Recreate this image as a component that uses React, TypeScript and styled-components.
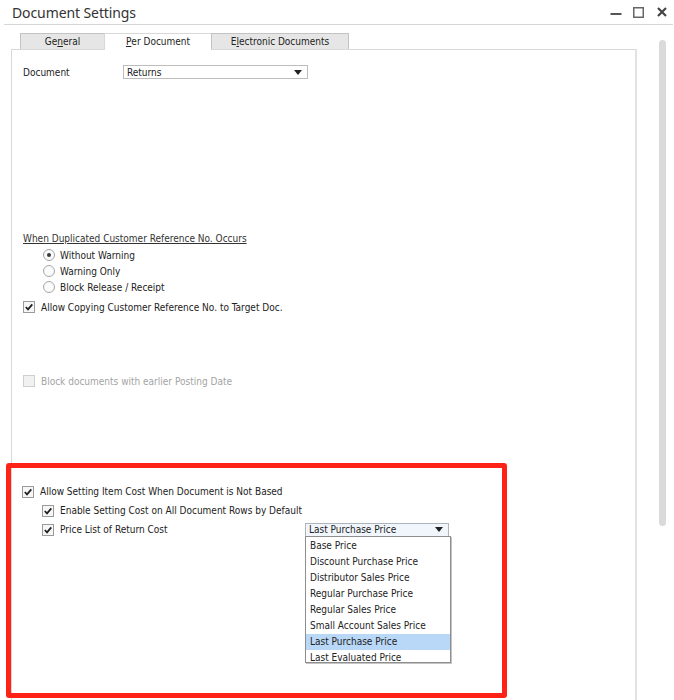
import React from 'react';
import styled, { createGlobalStyle } from 'styled-components';

const GlobalStyle = createGlobalStyle`
  html, body {
    margin: 0;
    padding: 0;
    background: #ffffff;
  }
  body {
    font-family: "DejaVu Sans Condensed", "DejaVu Sans", sans-serif;
    font-size: 10px;
    color: #222222;
  }
`;

const Window = styled.div`
  width: 674px;
  height: 700px;
  overflow: hidden;
  background: #ffffff;
  display: flex;
  flex-direction: column;
`;

const TitleBar = styled.header`
  height: 24px;
  margin: 0 1px 0 4px;
  padding-left: 8px;
  border-bottom: 1px solid #d6d6d6;
  display: flex;
  align-items: center;
  flex-shrink: 0;
`;

const Title = styled.h1`
  margin: 0;
  flex: 1;
  font-family: "Noto Sans", "Open Sans", sans-serif;
  font-weight: 400;
  font-size: 14px;
  color: #333333;
  letter-spacing: -0.1px;
`;

const WinButton = styled.button`
  width: 23px;
  height: 24px;
  padding: 0;
  border: none;
  background: transparent;
  display: flex;
  align-items: center;
  justify-content: center;
`;

const Body = styled.div`
  display: flex;
  align-items: flex-start;
  flex: 1;
`;

const TabsArea = styled.div`
  width: 626px;
  margin: 8px 0 0 11px;
  display: flex;
  flex-direction: column;
`;

const TabStrip = styled.div`
  display: flex;
  align-items: flex-start;
  height: 16px;
  padding-left: 10px;
  position: relative;
  z-index: 1;
`;

const Tab = styled.div<{ $active?: boolean; $w: number }>`
  width: ${(p) => p.$w}px;
  height: ${(p) => (p.$active ? 17 : 16)}px;
  margin-left: -1px;
  box-sizing: border-box;
  border: 1px solid ${(p) => (p.$active ? '#d8d8d8' : '#c3c3c3')};
  border-bottom: none;
  background: ${(p) => (p.$active ? '#ffffff' : '#e6e6e6')};
  display: flex;
  align-items: center;
  justify-content: center;
  color: #222222;
  padding-bottom: ${(p) => (p.$active ? 1 : 0)}px;

  u {
    text-decoration: underline;
  }
`;

const Panel = styled.div`
  height: 700px;
  border: 1px solid #d8d8d8;
  border-right: 2px solid #e2e2e2;
  padding: 0 11px;
  background: #ffffff;
`;

const Line = styled.div<{ $indent?: number; $gap?: number; $h?: number }>`
  display: flex;
  align-items: center;
  height: ${(p) => p.$h ?? 16}px;
  padding-left: ${(p) => p.$indent ?? 0}px;
  margin-top: ${(p) => p.$gap ?? 0}px;
`;

const FieldLabel = styled.span<{ $w: number }>`
  width: ${(p) => p.$w}px;
  flex-shrink: 0;
`;

const Select = styled.div<{ $w: number; $tint?: boolean }>`
  width: ${(p) => p.$w}px;
  height: 14px;
  box-sizing: border-box;
  border: 1px solid ${(p) => (p.$tint ? '#aeb4bc' : '#bdbdbd')};
  background: ${(p) => (p.$tint ? '#f1f6fd' : '#ffffff')};
  display: flex;
  align-items: center;
  justify-content: space-between;
  padding: 0 5px 0 3px;
  position: relative;
`;

const GroupTitle = styled.div`
  height: 16px;
  line-height: 16px;
  text-decoration: underline;
  color: #333333;
`;

const Box = styled.span<{ $disabled?: boolean }>`
  width: 12px;
  height: 12px;
  box-sizing: border-box;
  border: 1px solid ${(p) => (p.$disabled ? '#cfcfcf' : '#9a9a9a')};
  background: ${(p) => (p.$disabled ? '#f1f1f1' : '#f6f6f6')};
  display: flex;
  align-items: center;
  justify-content: center;
  flex-shrink: 0;
  margin-right: 6px;
`;

const Round = styled.span`
  width: 12px;
  height: 12px;
  box-sizing: border-box;
  border-radius: 50%;
  border: 1px solid #a5a5a5;
  background: #fbfbfb;
  display: flex;
  align-items: center;
  justify-content: center;
  flex-shrink: 0;
  margin-right: 5px;
`;

const Dot = styled.span`
  width: 4px;
  height: 4px;
  border-radius: 50%;
  background: #3a3a3a;
`;

const Text = styled.span<{ $disabled?: boolean }>`
  color: ${(p) => (p.$disabled ? '#a3a3a3' : '#222222')};
  white-space: nowrap;
`;

const Highlight = styled.section`
  width: 501px;
  height: 235px;
  margin: 74px 0 0 -17px;
  box-sizing: border-box;
  border: 5px solid #ff2216;
  border-radius: 3px;
  padding: 14px 0 0 11px;
  position: relative;
`;

const DropList = styled.ul`
  position: absolute;
  top: 100%;
  left: -1px;
  width: 146px;
  height: 127px;
  margin: 0;
  padding: 1px 0 0;
  list-style: none;
  box-sizing: border-box;
  overflow: hidden;
  background: #ffffff;
  border: 1px solid #8e8e8e;
  box-shadow: 1px 1px 0 #c4c4c4;
  z-index: 2;
`;

const DropItem = styled.li<{ $selected?: boolean }>`
  height: 16px;
  line-height: 16px;
  padding-left: 4px;
  background: ${(p) => (p.$selected ? '#b9d7f6' : 'transparent')};
  white-space: nowrap;
`;

const ScrollTrack = styled.div`
  width: 7px;
  height: 486px;
  margin: 15px 0 0 22px;
  border-radius: 4px;
  background: #dadada;
`;

const Arrow = () => (
  <svg width="8" height="5" viewBox="0 0 8 5">
    <polygon points="0,0 8,0 4,5" fill="#222" />
  </svg>
);

const Check = () => (
  <svg width="10" height="10" viewBox="0 0 10 10">
    <polyline points="1.8,5 4,7.4 8.3,2.4" fill="none" stroke="#1e1e1e" strokeWidth="1.7" />
  </svg>
);

const CheckLine = ({ label, indent, gap, h, checked = true, disabled }: {
  label: string; indent?: number; gap?: number; h?: number; checked?: boolean; disabled?: boolean;
}) => (
  <Line $indent={indent} $gap={gap} $h={h}>
    <Box $disabled={disabled}>{checked && <Check />}</Box>
    <Text $disabled={disabled}>{label}</Text>
  </Line>
);

const RadioLine = ({ label, on }: { label: string; on?: boolean }) => (
  <Line $indent={20}>
    <Round>{on && <Dot />}</Round>
    <Text>{label}</Text>
  </Line>
);

const priceLists = [
  'Base Price',
  'Discount Purchase Price',
  'Distributor Sales Price',
  'Regular Purchase Price',
  'Regular Sales Price',
  'Small Account Sales Price',
  'Last Purchase Price',
  'Last Evaluated Price',
];

export default function App() {
  return (
    <Window>
      <GlobalStyle />
      <TitleBar>
        <Title>Document Settings</Title>
        <WinButton aria-label="Minimize">
          <svg width="12" height="12" viewBox="0 0 12 12">
            <rect x="0.5" y="7" width="11" height="2" fill="#555" />
          </svg>
        </WinButton>
        <WinButton aria-label="Maximize">
          <svg width="11" height="11" viewBox="0 0 11 11">
            <rect x="0.75" y="0.75" width="9.5" height="9.5" fill="none" stroke="#666" strokeWidth="1.5" />
          </svg>
        </WinButton>
        <WinButton aria-label="Close">
          <svg width="10" height="10" viewBox="0 0 10 10">
            <path d="M1 1 L9 9 M9 1 L1 9" stroke="#444" strokeWidth="2.2" />
          </svg>
        </WinButton>
      </TitleBar>
      <Body>
        <TabsArea>
          <TabStrip>
            <Tab $w={85}>Ge<u>n</u>eral</Tab>
            <Tab $w={108} $active><u>P</u>er Document</Tab>
            <Tab $w={138}>E<u>l</u>ectronic Documents</Tab>
          </TabStrip>
          <Panel>
            <Line $gap={14}>
              <FieldLabel $w={100}>Document</FieldLabel>
              <Select $w={185}>
                <span>Returns</span>
                <Arrow />
              </Select>
            </Line>

            <GroupTitle style={{ marginTop: 151 }}>When Duplicated Customer Reference No. Occurs</GroupTitle>
            <RadioLine label="Without Warning" on />
            <RadioLine label="Warning Only" />
            <RadioLine label="Block Release / Receipt" />
            <CheckLine gap={4} label="Allow Copying Customer Reference No. to Target Doc." />

            <CheckLine gap={58} label="Block documents with earlier Posting Date" checked={false} disabled />

            <Highlight>
              <CheckLine h={19} label="Allow Setting Item Cost When Document is Not Based" />
              <CheckLine h={19} indent={20} label="Enable Setting Cost on All Document Rows by Default" />
              <Line $h={19} $indent={20}>
                <Box><Check /></Box>
                <FieldLabel $w={245}>Price List of Return Cost</FieldLabel>
                <Select $w={144} $tint>
                  <span>Last Purchase Price</span>
                  <Arrow />
                  <DropList>
                    {priceLists.map((p) => (
                      <DropItem key={p} $selected={p === 'Last Purchase Price'}>{p}</DropItem>
                    ))}
                  </DropList>
                </Select>
              </Line>
            </Highlight>
          </Panel>
        </TabsArea>
        <ScrollTrack />
      </Body>
    </Window>
  );
}
